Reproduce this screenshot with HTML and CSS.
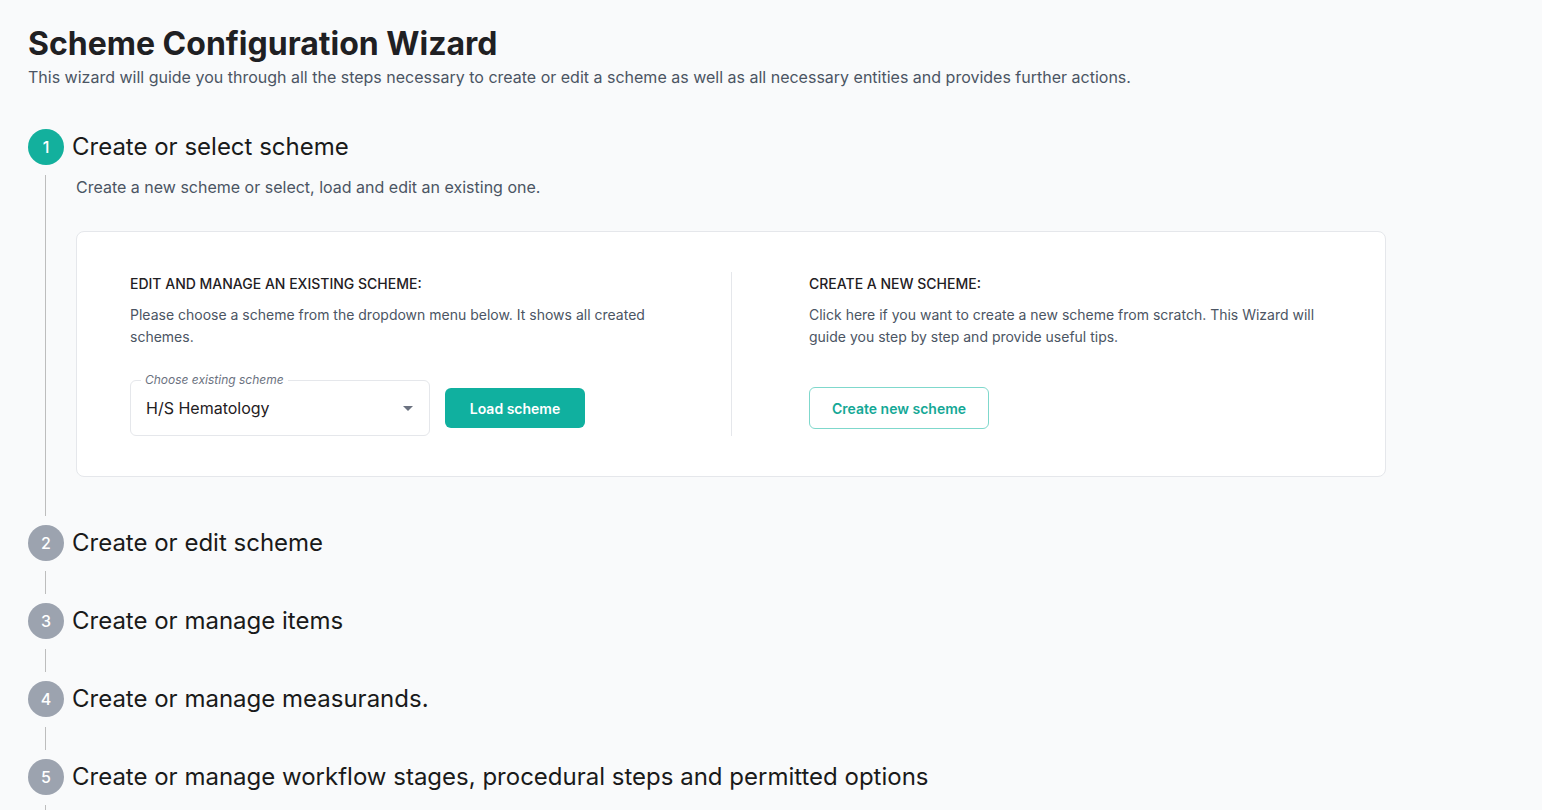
FILE: index.html
```html
<!DOCTYPE html>
<html lang="en">
<head>
<meta charset="utf-8">
<title>Scheme Configuration Wizard</title>
<link rel="stylesheet" href="styles.css">
</head>
<body>
<main class="page">
  <h1 class="title">Scheme Configuration Wizard</h1>
  <p class="subtitle">This wizard will guide you through all the steps necessary to create or edit a scheme as well as all necessary entities and provides further actions.</p>

  <ol class="stepper">
    <li class="step">
      <div class="step-head">
        <span class="step-num active">1</span>
        <span class="step-title">Create or select scheme</span>
      </div>
      <div class="step-body step-body-open">
        <p class="step-desc">Create a new scheme or select, load and edit an existing one.</p>
        <div class="card">
          <section class="card-col card-col-left">
            <h2 class="col-heading">EDIT AND MANAGE AN EXISTING SCHEME:</h2>
            <p class="col-text">Please choose a scheme from the dropdown menu below. It shows all created schemes.</p>
            <div class="actions">
              <div class="select">
                <span class="select-label">Choose existing scheme</span>
                <span class="select-value">H/S Hematology</span>
                <svg class="select-arrow" width="10" height="5" viewBox="0 0 10 5"><path d="M0 0h10L5 5z" fill="#6b7280"/></svg>
              </div>
              <button class="btn btn-primary">Load scheme</button>
            </div>
          </section>
          <section class="card-col card-col-right">
            <h2 class="col-heading">CREATE A NEW SCHEME:</h2>
            <p class="col-text">Click here if you want to create a new scheme from scratch. This Wizard will guide you step by step and provide useful tips.</p>
            <div class="actions">
              <button class="btn btn-outline">Create new scheme</button>
            </div>
          </section>
        </div>
      </div>
    </li>
    <li class="step">
      <div class="step-head">
        <span class="step-num">2</span>
        <span class="step-title">Create or edit scheme</span>
      </div>
      <div class="step-body"></div>
    </li>
    <li class="step">
      <div class="step-head">
        <span class="step-num">3</span>
        <span class="step-title">Create or manage items</span>
      </div>
      <div class="step-body"></div>
    </li>
    <li class="step">
      <div class="step-head">
        <span class="step-num">4</span>
        <span class="step-title">Create or manage measurands.</span>
      </div>
      <div class="step-body"></div>
    </li>
    <li class="step">
      <div class="step-head">
        <span class="step-num">5</span>
        <span class="step-title">Create or manage workflow stages, procedural steps and permitted options</span>
      </div>
      <div class="step-body"></div>
    </li>
  </ol>
</main>
</body>
</html>
```

FILE: styles.css
```css
* { box-sizing: border-box; }

html, body {
  margin: 0;
  padding: 0;
  background: #f9fafb;
  font-family: Inter, "Noto Sans", "Liberation Sans", sans-serif;
  color: #1f2023;
}

.page {
  padding: 24px 28px 0 28px;
}

.title {
  margin: 0;
  font-size: 32px;
  line-height: 40px;
  font-weight: 700;
  color: #1f2023;
}

.subtitle {
  margin: 1px 0 0 0;
  font-size: 16px;
  line-height: 24px;
  color: #4b5563;
}

.stepper {
  list-style: none;
  margin: 40px 0 0 0;
  padding: 0;
}

.step-head {
  display: flex;
  align-items: center;
  gap: 8px;
  height: 36px;
}

.step-num {
  width: 36px;
  height: 36px;
  border-radius: 50%;
  background: #9ca3af;
  color: #fff;
  font-size: 16px;
  font-weight: 500;
  display: flex;
  align-items: center;
  justify-content: center;
  flex: none;
}

.step-num.active {
  background: #13b09d;
}

.step-title {
  font-size: 24px;
  line-height: 32px;
  color: #1a1a1a;
}

.step-body {
  margin: 10px 0 9px 17px;
  border-left: 1px solid #bdbdbd;
  height: 23px;
}

.step-body-open {
  height: auto;
  padding: 0 0 39px 30px;
}

.step-desc {
  margin: 0;
  font-size: 16px;
  line-height: 24px;
  color: #4b5563;
}

.card {
  margin-top: 32px;
  width: 1310px;
  background: #fff;
  border: 1px solid #e5e7eb;
  border-radius: 8px;
  padding: 40px 53px;
  display: grid;
  grid-template-columns: 1fr 1fr;
}

.card-col-left {
  padding-right: 50px;
}

.card-col-right {
  border-left: 1px solid #e5e7eb;
  padding-left: 77px;
}

.col-heading {
  margin: 0;
  font-size: 14px;
  line-height: 24px;
  font-weight: 500;
  color: #1f2023;
}

.col-text {
  margin: 8px 0 0 0;
  font-size: 14px;
  line-height: 22px;
  color: #4b5563;
}

.actions {
  margin-top: 32px;
  height: 56px;
  display: flex;
  align-items: center;
  gap: 15px;
}

.select {
  position: relative;
  width: 300px;
  height: 56px;
  border: 1px solid #e5e7eb;
  border-radius: 6px;
  background: #fff;
  display: flex;
  align-items: center;
  padding: 0 15px;
}

.select-label {
  position: absolute;
  top: -9px;
  left: 10px;
  padding: 0 4px;
  background: #fff;
  font-size: 12px;
  line-height: 16px;
  font-style: italic;
  color: #6b7280;
}

.select-value {
  flex: 1;
  font-size: 16px;
  color: #1f2023;
}

.select-arrow {
  flex: none;
  margin-right: 1px;
}

.btn {
  font-family: Inter, "Noto Sans", "Liberation Sans", sans-serif;
  font-size: 14px;
  font-weight: 600;
  border-radius: 6px;
  cursor: pointer;
}

.btn-primary {
  width: 140px;
  height: 40px;
  background: #10b09f;
  color: #fff;
  border: none;
}

.btn-outline {
  width: 180px;
  height: 42px;
  background: #fff;
  color: #14a896;
  border: 1px solid #7fd8cc;
}
```
